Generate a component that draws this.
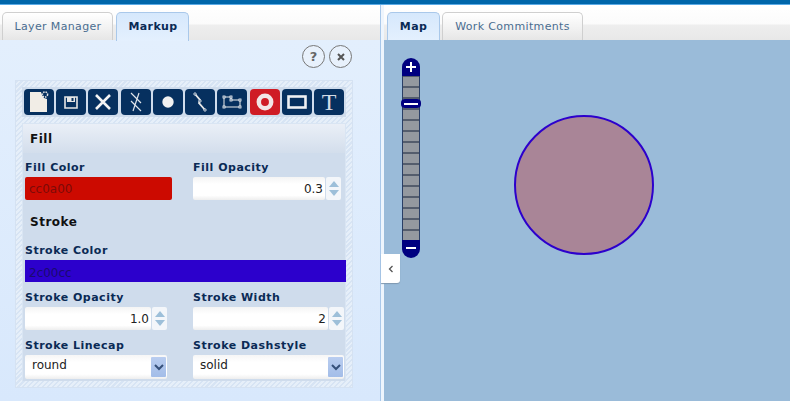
<div class="app">
  <div class="topbar"></div>
  <div class="main">
    <section class="left">
      <nav class="strip">
        <div class="tab lm">Layer Manager</div>
        <div class="tab active mk">Markup</div>
      </nav>
      <div class="leftbody">
        <div class="helprow">
          <span class="round">?</span>
          <span class="round">
            <svg width="10" height="10" viewBox="0 0 10 10"><path d="M2 2l6 6M8 2l-6 6" stroke="#555" stroke-width="2"/></svg>
          </span>
        </div>
        <div class="hatch">
          <div class="toolbar">
            <button class="tb" aria-label="New">
              <svg width="24" height="22" viewBox="0 0 24 22">
                <path d="M3 1h11l1 3 2 3 3 1v13H3z" fill="#f1ede6"/>
                <circle cx="18" cy="3.5" r="2.6" fill="none" stroke="#e6e6e6" stroke-width="1.5" stroke-dasharray="1.5 1"/>
              </svg>
            </button>
            <button class="tb" aria-label="Save">
              <svg width="14" height="13" viewBox="0 0 14 13">
                <path d="M1 1h12v11H1z" fill="none" stroke="#e6e6e6" stroke-width="1.6"/>
                <path d="M3 1h8v5H3z" fill="#e6e6e6"/><path d="M7.5 2h2v3h-2z" fill="#06305f"/>
              </svg>
            </button>
            <button class="tb" aria-label="Delete">
              <svg width="18" height="18" viewBox="0 0 18 18"><path d="M2 2l14 14M16 2L2 16" stroke="#f4f4f4" stroke-width="2.6"/></svg>
            </button>
            <button class="tb" aria-label="Delete all">
              <svg width="14" height="20" viewBox="0 0 14 20">
                <path d="M2 1l10 10M10 1L4 19M2 9l10 10" stroke="#dfe4ea" stroke-width="1.2" fill="none"/>
              </svg>
            </button>
            <button class="tb" aria-label="Point"><svg width="14" height="14" viewBox="0 0 14 14"><circle cx="7" cy="7" r="5.7" fill="#f1f1f1"/></svg></button>
            <button class="tb" aria-label="Line">
              <svg width="14" height="20" viewBox="0 0 14 20">
                <path d="M2 2l5 6-1 3 6 7" stroke="#e8e8e8" stroke-width="1.8" fill="none"/>
                <circle cx="2" cy="2" r="1.2" fill="#06305f" stroke="#fff" stroke-width=".8"/><circle cx="7" cy="9" r="1.2" fill="#06305f" stroke="#fff" stroke-width=".8"/><circle cx="12" cy="18" r="1.2" fill="#06305f" stroke="#fff" stroke-width=".8"/>
              </svg>
            </button>
            <button class="tb" aria-label="Polygon">
              <svg width="20" height="14" viewBox="0 0 20 14">
                <path d="M2 2h7v3h9v7H2z" fill="none" stroke="#eee" stroke-width="1"/>
                <g fill="#06305f" stroke="#fff" stroke-width=".8">
                  <rect x="1" y="1" width="2" height="2"/><rect x="8" y="1" width="2" height="2"/><rect x="8" y="4" width="2" height="2"/><rect x="17" y="4" width="2" height="2"/><rect x="17" y="11" width="2" height="2"/><rect x="1" y="11" width="2" height="2"/>
                </g>
              </svg>
            </button>
            <button class="tb on" aria-label="Circle"><svg width="20" height="20" viewBox="0 0 20 20"><circle cx="10" cy="10" r="6.2" fill="none" stroke="#f2e6e6" stroke-width="4.5"/></svg></button>
            <button class="tb" aria-label="Rectangle"><svg width="20" height="14" viewBox="0 0 20 14"><rect x="1.5" y="1.5" width="17" height="11" fill="none" stroke="#eef0f3" stroke-width="2.6"/></svg></button>
            <button class="tb t">T</button>
          </div>
          <div class="form">
            <h3 class="hfill">Fill</h3>
            <div class="rows">
              <div class="row r1">
                <div class="field f1">
                  <label for="fc">Fill Color</label>
                  <input id="fc" class="color red" value="cc0a00" />
                </div>
                <div class="field">
                  <label for="fo">Fill Opacity</label>
                  <div class="spin w148">
                    <input id="fo" class="num" value="0.3" />
                    <span class="arrows"><i class="up"></i><i class="dn"></i></span>
                  </div>
                </div>
              </div>
              <h3 class="hstroke">Stroke</h3>
              <div class="field full">
                <label for="sc">Stroke Color</label>
                <input id="sc" class="color blue" value="2c00cc" />
              </div>
              <div class="row r3">
                <div class="field f1">
                  <label for="so">Stroke Opacity</label>
                  <div class="spin w142">
                    <input id="so" class="num" value="1.0" />
                    <span class="arrows"><i class="up"></i><i class="dn"></i></span>
                  </div>
                </div>
                <div class="field">
                  <label for="sw">Stroke Width</label>
                  <div class="spin w151">
                    <input id="sw" class="num" value="2" />
                    <span class="arrows"><i class="up"></i><i class="dn"></i></span>
                  </div>
                </div>
              </div>
              <div class="row r4">
                <div class="field f1">
                  <span class="lab">Stroke Linecap</span>
                  <div class="select w142"><span>round</span><b><svg width="10" height="7" viewBox="0 0 10 7"><path d="M1 1l4 4 4-4" fill="none" stroke="#35507a" stroke-width="2"/></svg></b></div>
                </div>
                <div class="field">
                  <span class="lab">Stroke Dashstyle</span>
                  <div class="select w151"><span>solid</span><b><svg width="10" height="7" viewBox="0 0 10 7"><path d="M1 1l4 4 4-4" fill="none" stroke="#35507a" stroke-width="2"/></svg></b></div>
                </div>
              </div>
            </div>
          </div>
        </div>
      </div>
    </section>
    <div class="splitter"></div>
    <section class="right">
      <nav class="strip rstrip">
        <div class="tab active map">Map</div>
        <div class="tab wc">Work Commitments</div>
      </nav>
      <div class="map-canvas">
        <button class="collapse" aria-label="Collapse">
          <svg width="8" height="10" viewBox="0 0 8 10"><path d="M5.5 2L2.5 5l3 3" fill="none" stroke="#555" stroke-width="1.3"/></svg>
        </button>
        <div class="zoom">
          <div class="cap top"><span class="h"></span><span class="v"></span></div>
          <div class="track"></div>
          <div class="cap bottom"><span class="h"></span></div>
          <div class="handle"><span class="h"></span></div>
        </div>
        <svg class="shape" width="142" height="142" viewBox="0 0 142 142">
          <circle cx="71" cy="71" r="69" fill="#cc0a00" fill-opacity="0.3" stroke="#2c00cc" stroke-width="2"/>
        </svg>
      </div>
    </section>
  </div>
</div>

<style>
  :global(body) { margin: 0; }
  * { box-sizing: border-box; }
  .app { width: 790px; height: 401px; display: flex; flex-direction: column; overflow: hidden; font-family: "DejaVu Sans", sans-serif; background: #fff; }
  .topbar { height: 5px; background: #0066aa; border-bottom: 1px solid #5aaae6; }
  .main { flex: 1; display: flex; min-height: 0; }
  .left { width: 380px; display: flex; flex-direction: column; }
  .splitter { width: 4px; background: linear-gradient(90deg, #a9c8ea 0 1px, #eef5fd 1px); }
  .right { flex: 1; display: flex; flex-direction: column; min-width: 0; }
  .strip {
    height: 35px; padding: 7px 0 0 2px; display: flex; gap: 3px; flex: none;
    background: linear-gradient(#fff 0, #fbfbfb 19px, #eeeeee 20px, #e8e8e8 100%);
  }
  .rstrip { padding-left: 3px; gap: 2px; }
  .tab {
    height: 28px; line-height: 27px; font-size: 11px; letter-spacing: .35px; color: #4a6d90; text-align: center; white-space: nowrap; text-indent: 1px;
    border: 1px solid #cfcfcf; border-bottom: 0; border-radius: 5px 5px 0 0;
    background: linear-gradient(#fff, #f2f2f2 55%, #e6e6e6);
  }
  .tab.active {
    height: 29px; margin-bottom: -1px; position: relative; color: #0a2a55; font-weight: 700;
    border-color: #a9c8ea; background: linear-gradient(#d6e8fc, #e4f0fe);
  }
  .tab.lm { width: 111px; }
  .tab.mk { width: 73px; }
  .tab.map { width: 53px; text-indent: 0; }
  .tab.wc { width: 141px; text-indent: 0; }
  .leftbody { flex: 1; background: linear-gradient(#e3effd, #d8e8fc); padding: 0 0 0 15px; min-height: 0; }
  .helprow { height: 40px; display: flex; justify-content: flex-end; gap: 4px; padding: 5px 28px 0 0; }
  .round {
    width: 23px; height: 23px; border-radius: 50%; border: 1.5px solid #777; display: flex; align-items: center; justify-content: center;
    font-size: 13px; font-weight: 700; color: #666; background: #e8f1fc; line-height: 1;
  }
  .hatch {
    width: 338px; height: 308px; padding: 6px;
    border: 1px solid #d5e2f2;
    background: repeating-linear-gradient(135deg, #d7e4f4 0 1.5px, #e6eff9 1.5px 3.5px);
  }
  .toolbar { height: 30px; background: #cfdcec; display: flex; justify-content: space-between; padding: 2px 2px 0; }
  .tb {
    width: 30px; height: 26px; padding: 0; border: 0; border-radius: 4px; background: #06305f; display: flex; align-items: center; justify-content: center; color: #e0e0e0;
    flex: none;
  }
  .tb.on { background: #cf1c25; }
  .tb.t { font: 400 24px/26px "Liberation Serif", serif; color: #d3dbe5; }
  .form { height: 258px; margin-top: 6px; background: #cfdcec; border: 1px solid #d9e5f3; border-bottom: 0; }
  h3 { margin: 0; font-size: 12px; font-weight: 700; color: #111; letter-spacing: .5px; }
  .hfill { height: 29px; padding: 8px 0 0 7px; background: linear-gradient(#eaeff7, #d3deec); }
  .rows { padding: 0 0 0 2px; }
  .row { display: flex; }
  .r1 { padding-top: 6px; }
  .r3 { margin-top: 7px; }
  .r4 { margin-top: 7px; }
  .field { display: flex; flex-direction: column; }
  .f1 { width: 168px; }
  label, .lab { display: block; height: 18px; font-size: 11px; font-weight: 700; letter-spacing: .5px; color: #0a2a55; line-height: 18px; }
  .hstroke { height: 42px; padding: 15px 0 0 5px; line-height: 14px; }
  input { font: 12px "DejaVu Sans", sans-serif; border: 0; outline: 0; padding: 0; margin: 0; }
  .color { height: 23px; border-radius: 2px; padding: 0 4px; width: 147px; }
  .red { background: #cc0a00; color: #7c0a08; }
  .full .color { width: 321px; height: 22px; border-radius: 0; }
  .blue { background: #2c00cc; color: #1a0a70; padding-top: 3px; }
  .spin { display: flex; height: 23px; }
  .w148 { width: 148px; }
  .w142 { width: 142px; }
  .w151 { width: 151px; }
  .num { flex: 1; min-width: 0; height: 23px; text-align: right; padding-right: 2px; border-radius: 2px; background: linear-gradient(#f4f4f4, #fff 30%, #fff 80%, #eee); color: #222; font-size: 12px; }
  .arrows { width: 15px; margin-left: 1px; height: 23px; display: flex; flex-direction: column; align-items: center; justify-content: space-around; background: #f3f6fa; border-radius: 2px; padding: 3px 0; }
  .arrows i { width: 0; height: 0; border-left: 5px solid transparent; border-right: 5px solid transparent; }
  .up { border-bottom: 6px solid #9dbfd9; }
  .dn { border-top: 6px solid #9dbfd9; }
  .select { height: 24px; border-radius: 2px; display: flex; align-items: center; justify-content: space-between; padding: 0 1px 0 7px; background: linear-gradient(#f6f6f6, #fff 30%, #fff 80%, #eee); font-size: 12px; color: #222; }
  .select span { margin-bottom: 4px; }
  .select b { width: 15px; height: 20px; background: linear-gradient(#b9cdf0, #a3bde8); display: flex; align-items: center; justify-content: center; border-radius: 1px; }
  .map-canvas { flex: 1; position: relative; background: #9abbd9; min-height: 0; }
  .collapse { position: absolute; left: -3px; top: 214px; width: 19px; height: 29px; padding: 0; border: 0; background: #fff; border-radius: 0 0 3px 0; display: flex; align-items: center; justify-content: center; box-shadow: 0 1px 1px #7f98b0; }
  .zoom { position: absolute; left: 18px; top: 18px; width: 18px; height: 200px; display: flex; flex-direction: column; }
  .cap { height: 18px; background: #000080; position: relative; flex: none; }
  .cap.top { border-radius: 9px 9px 0 0; }
  .cap.bottom { border-radius: 0 0 9px 9px; }
  .cap .h, .handle .h { position: absolute; left: 4px; top: 8px; width: 10px; height: 2.4px; background: #fff; }
  .cap.bottom .h { top: 7px; }
  .cap .v { position: absolute; left: 7.8px; top: 4px; width: 2.4px; height: 10px; background: #fff; }
  .track { flex: 1; border-left: 1px solid #2a3f66; border-right: 1px solid #2a3f66; background: repeating-linear-gradient(#545d6c 0 .8px, #94999f .8px 10.2px, #545d6c 10.2px 11px); }
  .handle { position: absolute; left: -1px; top: 41px; width: 20px; height: 9px; background: #000080; border-radius: 4px; }
  .handle .h { left: 3px; top: 3.5px; width: 14px; }
  .shape { position: absolute; left: 129px; top: 74px; }
</style>
